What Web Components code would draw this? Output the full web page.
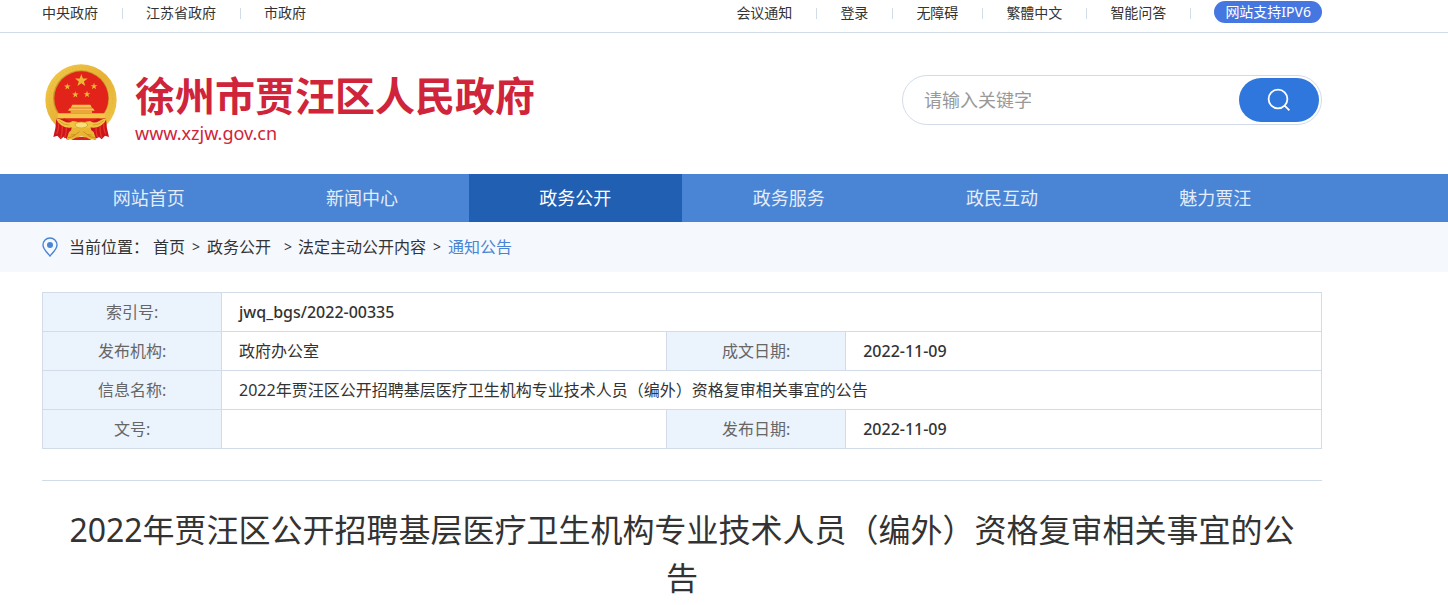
<!DOCTYPE html>
<html lang="zh-CN">
<head>
<meta charset="utf-8">
<meta name="viewport" content="width=device-width, initial-scale=1">
<title>徐州市贾汪区人民政府</title>
<style>
  body {
    margin: 0;
    background: #fff;
    color: #333;
    font: 16px/24px "Noto Sans", "Noto Sans CJK SC", sans-serif;
    --inset-start: 42px;
    --inset-end: 126px;
    --line: #d2dce8;
    --blue: #4a84d4;
  }
</style>
</head>
<body>
<gov-page></gov-page>

<script>
const define = (name, html) => {
  const template = document.createElement('template');
  template.innerHTML = html;
  customElements.define(name, class extends HTMLElement {
    constructor() {
      super();
      this.attachShadow({ mode: 'open' }).append(template.content.cloneNode(true));
    }
  });
};

define('top-link', `
  <style>
    :host { display: flex; align-items: center; }
    a { color: #333; text-decoration: none; white-space: nowrap; }
    :host::after { content: ""; width: 1px; height: 11px; margin: 0 23px 0 24px; background: var(--line); }
    :host([last])::after { display: none; }
  </style>
  <a href="#"><slot></slot></a>`);

define('top-bar', `
  <style>
    :host {
      display: flex; justify-content: space-between; height: 32px;
      padding: 0 var(--inset-end) 0 var(--inset-start);
      border-bottom: 1px solid var(--line); font-size: 14px; line-height: 26px;
    }
    div { display: flex; height: 26px; align-items: center; }
    .pill {
      align-self: flex-start; margin-top: 1px; padding: 0 11px; border-radius: 11px; background: #4677e0;
      color: #fff; line-height: 22px; text-decoration: none; white-space: nowrap;
    }
  </style>
  <div>
    <top-link>中央政府</top-link><top-link>江苏省政府</top-link><top-link last>市政府</top-link>
  </div>
  <div>
    <top-link>会议通知</top-link><top-link>登录</top-link><top-link>无障碍</top-link>
    <top-link>繁體中文</top-link><top-link>智能问答</top-link>
    <a class="pill" href="#">网站支持IPV6</a>
  </div>`);

define('national-emblem', `
  <style>:host { display: block; } svg { display: block; width: 72px; height: 76px; }</style>
  <svg viewBox="0 0 216 228" aria-hidden="true">
    <defs>
      <linearGradient id="gold" x1="0" y1="0" x2="1" y2="1">
        <stop offset="0" stop-color="#f3cb4a"/><stop offset=".5" stop-color="#e6b236"/><stop offset="1" stop-color="#f0c848"/>
      </linearGradient>
      <path id="star" d="M0-20 4.7-6.5 19-6.2 7.6 2.5 11.8 16.2 0 8-11.8 16.2-7.6 2.5-19-6.2-4.7-6.5Z"/>
    </defs>
    <circle cx="108" cy="108" r="107" fill="url(#gold)"/>
    <circle cx="108" cy="106" r="95" fill="none" stroke="#dfab32" stroke-width="2" stroke-dasharray="3 7"/>
    <circle cx="108" cy="103" r="84" fill="#c9962a"/>
    <circle cx="109" cy="103" r="81" fill="#e2231a"/>
    <g fill="#edb935">
      <use href="#star" x="109" y="50"/>
      <use href="#star" transform="translate(67 68) scale(.52)"/>
      <use href="#star" transform="translate(147 67) scale(.52)"/>
      <use href="#star" transform="translate(91 92) scale(.52)"/>
      <use href="#star" transform="translate(126 91) scale(.52)"/>
    </g>
    <path d="M82 122h54l5 9H77ZM74 133h70l5 7H69Z" fill="#f4c54e"/>
    <path d="M77 139h64v8H77Z" fill="#e8a93a"/>
    <path d="M38 148h142v15H38Z" fill="#f4c547"/>
    <path d="M34 163q-1 30-9 56l12-4 10 11 9-8 14 10 14-50-25-14Z" fill="#c9151b"/>
    <path d="M183 163q1 30 9 56l-12-4-10 11-9-8-14 10-14-50 25-14Z" fill="#c9151b"/>
    <path d="M40 172q3 22-5 38M51 176q3 26-4 46M63 184q3 20-5 38M177 172q-3 22 5 38M166 176q-3 26 4 46M154 184q-3 20 5 38" fill="none" stroke="#ee3428" stroke-width="4"/>
    <path d="M32 162q14 2 25 10 13 8 26-1 13 0 26 8 13-8 26-8 13 9 26 1 11-8 25-10-12 28-40 29-18-2-37 6-19-8-37-6-28-1-40-29Z" fill="#f0c343"/>
    <path d="M42 170q14 14 32 13M176 170q-14 14-32 13" fill="none" stroke="#c98d20" stroke-width="2"/>
    <path d="M85 191q24 6 48 0 4 9 13 13l8 24q-25-1-45-12-20 11-45 12l8-24q9-4 13-13Z" fill="#e9b532"/>
    <path d="M78 213q15 2 25-10M140 213q-15 2-25-10M68 221q13-1 22-7M150 221q-13-1-22-7" fill="none" stroke="#b77a17" stroke-width="2"/>
    <ellipse cx="109" cy="183" rx="19" ry="9" fill="#f9df7b" stroke="#ce9420" stroke-width="2"/>
    <path d="M78 228q31-20 62 0Z" fill="#d8201c"/>
  </svg>`);

define('search-box', `
  <style>
    :host { display: block; width: 420px; }
    form {
      display: flex; box-sizing: border-box; height: 50px; padding: 2px;
      border: 1px solid var(--line); border-radius: 25px;
    }
    input {
      flex: 1; min-width: 0; padding: 0 19px; border: 0; outline: 0; background: none;
      font: inherit; font-size: 18px; color: #333;
    }
    input::placeholder { color: #999; opacity: 1; }
    button {
      display: grid; place-items: center; width: 80px; padding: 0; border: 0;
      border-radius: 22px; background: #2f77dc; color: #fff;
    }
    svg { width: 24px; height: 24px; }
  </style>
  <form>
    <input type="text" placeholder="请输入关键字" aria-label="请输入关键字">
    <button type="button" aria-label="搜索">
      <svg viewBox="0 0 24 24" fill="none" stroke="currentColor" stroke-width="1.8">
        <circle cx="11" cy="11" r="9.4"/><path d="m17.6 17.6 4.8 4.800"/>
      </svg>
    </button>
  </form>`);

define('site-header', `
  <style>
    :host {
      display: flex; align-items: flex-start; justify-content: space-between;
      height: 110px; padding: 31px var(--inset-end) 0 calc(var(--inset-start) + 3px);
    }
    .brand { display: flex; align-items: flex-start; gap: 18px; color: #cf2439; text-decoration: none; }
    .text { padding-top: 8px; }
    .name { display: block; font-size: 40px; line-height: 48px; font-weight: 700; white-space: nowrap; }
    .url { display: block; font-size: 18px; line-height: 26px; }
    search-box { margin-top: 11px; }
  </style>
  <a class="brand" href="#">
    <national-emblem></national-emblem>
    <span class="text"><span class="name">徐州市贾汪区人民政府</span><span class="url">www.xzjw.gov.cn</span></span>
  </a>
  <search-box></search-box>`);

define('nav-item', `
  <style>
    :host { display: block; }
    a { display: block; color: #e4edf9; text-align: center; text-decoration: none; }
    :host([active]) a { background: #215fb3; color: #fff; }
  </style>
  <a href="#"><slot></slot></a>`);

define('main-nav', `
  <style>
    :host { display: block; padding: 0 var(--inset-end) 0 var(--inset-start); background: var(--blue); }
    nav { display: grid; grid-template-columns: repeat(6, 1fr); font-size: 18px; line-height: 48px; }
  </style>
  <nav>
    <nav-item>网站首页</nav-item><nav-item>新闻中心</nav-item><nav-item active>政务公开</nav-item>
    <nav-item>政务服务</nav-item><nav-item>政民互动</nav-item><nav-item>魅力贾汪</nav-item>
  </nav>`);

define('bread-crumb', `
  <style>
    :host {
      display: block; padding: 0 var(--inset-end) 0 var(--inset-start); background: #f5f8fd;
    }
    nav { display: flex; align-items: center; height: 50px; white-space: nowrap; }
    svg { width: 16px; height: 20px; margin-right: 11px; }
    a { color: inherit; text-decoration: none; }
    .label { margin-right: 4px; }
    i { width: 8px; margin: 0 7px; font-style: normal; font-size: 14px; }
    .wide { margin: 0 6px 0 13px; }
    .here { color: var(--blue); }
  </style>
  <nav>
    <svg viewBox="0 0 16 20" aria-hidden="true">
      <path d="M8 1a7 7 0 0 1 7 7c0 4-4 7.500-7 11C5 15.500 1 12 1 8a7 7 0 0 1 7-7Z" fill="none" stroke="#4a84d4" stroke-width="1.400"/>
      <circle cx="8" cy="8" r="3" fill="#4a84d4"/>
    </svg>
    <span class="label">当前位置：</span>
    <a href="#">首页</a><i>&gt;</i><a href="#">政务公开</a><i class="wide">&gt;</i>
    <a href="#">法定主动公开内容</a><i>&gt;</i><a class="here" href="#">通知公告</a>
  </nav>`);

define('info-table', `
  <style>
    :host { display: block; }
    table { width: 100%; border-collapse: collapse; table-layout: fixed; }
    th, td { height: 38px; padding: 0 17px; border: 1px solid var(--line); font-weight: 400; }
    th { background: #ebf3fd; color: #666; text-align: center; }
    td { text-align: left; }
    .code { font-weight: 500; }
    .key { width: 14%; }
    .short { width: 34.8%; }
  </style>
  <table>
    <colgroup><col class="key"><col class="short"><col class="key"><col></colgroup>
    <tr><th scope="row">索引号:</th><td class="code" colspan="3">jwq_bgs/2022-00335</td></tr>
    <tr><th scope="row">发布机构:</th><td>政府办公室</td><th scope="row">成文日期:</th><td class="code">2022-11-09</td></tr>
    <tr><th scope="row">信息名称:</th><td colspan="3">2022年贾汪区公开招聘基层医疗卫生机构专业技术人员（编外）资格复审相关事宜的公告</td></tr>
    <tr><th scope="row">文号:</th><td></td><th scope="row">发布日期:</th><td class="code">2022-11-09</td></tr>
  </table>`);

define('article-title', `
  <style>
    :host { display: block; margin-top: 31px; padding: 25px 20px 0; border-top: 1px solid var(--line); }
    h1 { margin: 0; font-size: 32px; line-height: 48px; font-weight: 400; text-align: center; }
  </style>
  <h1><slot></slot></h1>`);

define('gov-page', `
  <style>
    :host { display: block; }
    main { padding: 20px var(--inset-end) 0 var(--inset-start); }
  </style>
  <top-bar></top-bar>
  <site-header></site-header>
  <main-nav></main-nav>
  <bread-crumb></bread-crumb>
  <main>
    <info-table></info-table>
    <article-title>2022年贾汪区公开招聘基层医疗卫生机构专业技术人员（编外）资格复审相关事宜的公告</article-title>
  </main>`);
</script>
</body>
</html>
